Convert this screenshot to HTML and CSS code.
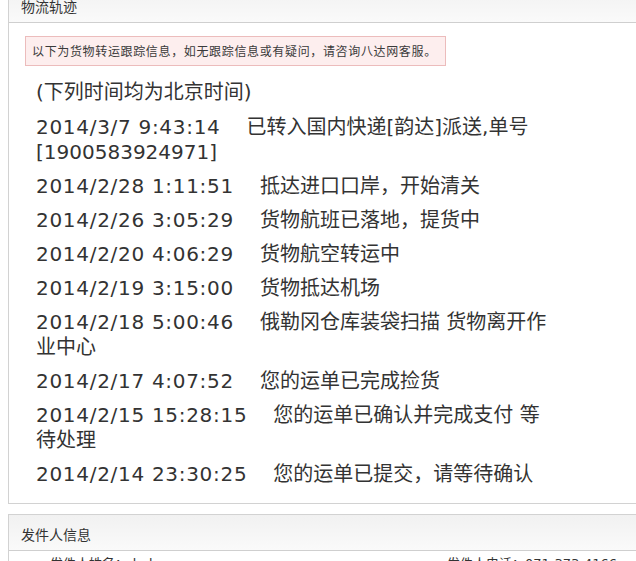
FILE: index.html
```html
<!DOCTYPE html>
<html lang="zh-CN">
<head>
<meta charset="utf-8">
<title>物流轨迹</title>
<link rel="stylesheet" href="styles.css">
</head>
<body>
<div class="page">
  <section class="panel">
    <div class="panel-head">物流轨迹</div>
    <div class="panel-body">
      <div class="notice">以下为货物转运跟踪信息，如无跟踪信息或有疑问，请咨询八达网客服。</div>
      <div class="track">
        <div class="track-item">(下列时间均为北京时间)</div>
        <div class="track-item"><span class="time">2014/3/7 9:43:14</span>已转入国内快递[韵达]派送,单号[1900583924971]</div>
        <div class="track-item"><span class="time">2014/2/28 1:11:51</span>抵达进口口岸，开始清关</div>
        <div class="track-item"><span class="time">2014/2/26 3:05:29</span>货物航班已落地，提货中</div>
        <div class="track-item"><span class="time">2014/2/20 4:06:29</span>货物航空转运中</div>
        <div class="track-item"><span class="time">2014/2/19 3:15:00</span>货物抵达机场</div>
        <div class="track-item"><span class="time">2014/2/18 5:00:46</span>俄勒冈仓库装袋扫描 货物离开作业中心</div>
        <div class="track-item"><span class="time">2014/2/17 4:07:52</span>您的运单已完成捡货</div>
        <div class="track-item"><span class="time">2014/2/15 15:28:15</span>您的运单已确认并完成支付 等待处理</div>
        <div class="track-item"><span class="time">2014/2/14 23:30:25</span>您的运单已提交，请等待确认</div>
      </div>
    </div>
  </section>
  <section class="panel">
    <div class="panel-head">发件人信息</div>
    <div class="info-row">
      <span class="info-cell info-left">发件人姓名：dada</span>
      <span class="info-cell info-right">发件人电话：071-373-4166</span>
    </div>
  </section>
</div>
</body>
</html>
```

FILE: styles.css
```css
html, body {
  margin: 0;
  padding: 0;
  overflow: hidden;
  background: #ffffff;
}

body {
  font-family: "DejaVu Sans", "Noto Sans CJK SC", sans-serif;
  color: #333333;
}

.page {
  margin-top: -14px;
  padding-left: 8px;
  margin-right: -30px;
}

.panel {
  border: 1px solid #d2d2d2;
  background: #ffffff;
  margin-bottom: 10px;
}

.panel-head {
  height: 32px;
  padding: 3px 0 0 12px;
  line-height: 32px;
  font-size: 14px;
  color: #333333;
  font-family: "Noto Sans CJK SC", sans-serif;
  background: linear-gradient(#f1f1f1, #fafafa);
  border-bottom: 1px solid #cfcfcf;
}

.panel-body {
  padding: 13px 16px 16px 16px;
}

.notice {
  display: inline-block;
  height: 28px;
  line-height: 28px;
  padding: 0 8px 0 6px;
  font-size: 12px;
  letter-spacing: 0.65px;
  color: #3a3a3a;
  background: #fdeeee;
  border: 1px solid #ecbcbc;
  font-family: "Noto Sans CJK SC", sans-serif;
}

.track {
  margin-top: 14px;
  padding-left: 11px;
  width: 520px;
  font-size: 20px;
  line-height: 25px;
}

.track-item + .track-item {
  margin-top: 9px;
  padding-top: 1px;
}

.track-item + .track-item + .track-item {
  padding-top: 0;
}

.time {
  letter-spacing: 0.7px;
  margin-right: 26px;
}

.info-row {
  display: flex;
  font-size: 13px;
  line-height: 20px;
  padding-top: 3px;
  height: 40px;
}

.info-left {
  padding-left: 41px;
  width: 397px;
}
```
